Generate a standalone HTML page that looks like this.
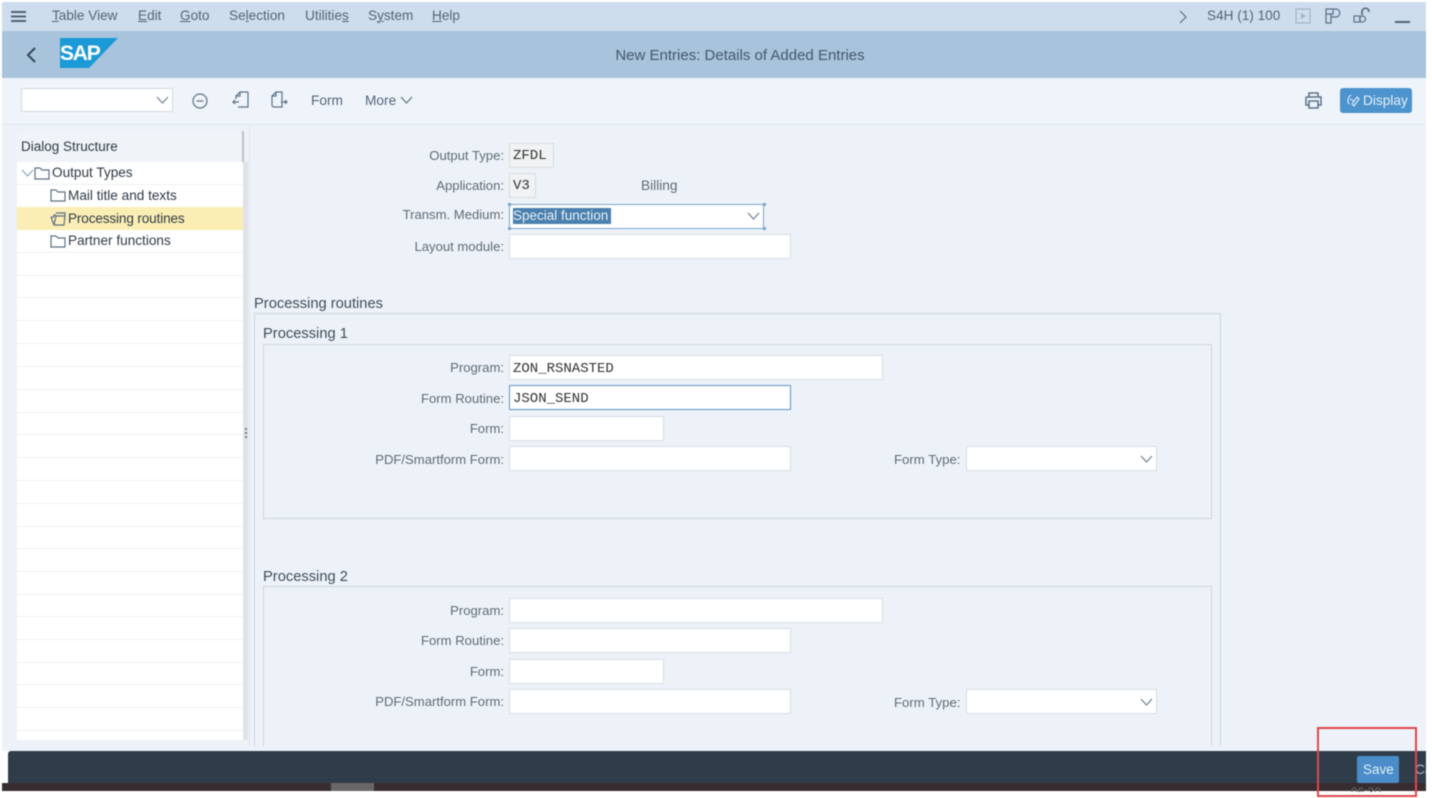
<!DOCTYPE html>
<html><head><meta charset="utf-8"><style>
html,body{margin:0;padding:0;background:#fff}
#p{position:relative;width:1432px;height:798px;overflow:hidden;background:#fff;font-family:"Liberation Sans",sans-serif;font-size:13.700px;color:#3f4d5a;filter:blur(.45px)}
#p div,#p span.a,#p svg{position:absolute}
.t{white-space:nowrap;line-height:18px}
.m{top:6.500px;color:#53657a;font-size:13.600px}
.m u{text-decoration-thickness:1px}
.l{white-space:nowrap;line-height:18px;text-align:right;width:240px;color:#5f6b76;font-size:13.100px}
.i{background:#fff;border:1px solid #d5dde5;box-sizing:border-box}
.v{font-family:"Liberation Mono",monospace;font-size:14px;color:#333;white-space:nowrap;line-height:18px}
.r{left:17px;width:226px;height:1px;background:#eceff3}
.k{font-size:13.600px;color:#2f3b46;white-space:nowrap;line-height:18px}
.f{position:absolute;border:1px solid #ccd5de;box-sizing:border-box}
svg{fill:none;stroke:#5c7188;stroke-width:1.2}
</style></head><body><div id="p">
<div style="left:2px;top:2px;width:1424px;height:29px;background:#cedded"></div>
<div style="left:2px;top:31px;width:1424px;height:47px;background:#a8c3dc"></div>
<div style="left:2px;top:78px;width:1424px;height:46px;background:#eff4fa;border-bottom:1px solid #dfe6ee"></div>
<div style="left:2px;top:125px;width:1424px;height:626px;background:#edf2f8"></div>

<svg style="left:10px;top:10px" width="17" height="14" viewBox="0 0 17 14"><path d="M1 2h15M1 6.500h15M1 11h15" stroke="#4f6378" stroke-width="2"/></svg>
<div class="t m" style="left:52px"><u>T</u>able View</div>
<div class="t m" style="left:138px"><u>E</u>dit</div>
<div class="t m" style="left:180px"><u>G</u>oto</div>
<div class="t m" style="left:229px">Se<u>l</u>ection</div>
<div class="t m" style="left:305px">Utilitie<u>s</u></div>
<div class="t m" style="left:368px">S<u>y</u>stem</div>
<div class="t m" style="left:432px"><u>H</u>elp</div>
<svg style="left:1178px;top:10px" width="10" height="14" viewBox="0 0 10 14"><path d="M2 1l6 6-6 6"/></svg>
<div class="t m" style="left:1207px;font-size:13.600px">S4H (1) 100</div>
<svg style="left:1295px;top:8px" width="16" height="16" viewBox="0 0 16 16"><rect x="1" y="1" width="14" height="14" stroke="#a5b5c6"/><path d="M6 5l5 3-5 3z" fill="#a5b5c6" stroke="none"/></svg>
<svg style="left:1324px;top:8px" width="18" height="16" viewBox="0 0 18 16"><path d="M2 1h7v5H2zM2 6v9h5v-9M9 1h3c5 0 5 8 0 8H7"/></svg>
<svg style="left:1353px;top:7px" width="18" height="17" viewBox="0 0 18 17"><rect x="1" y="9" width="6" height="6"/><circle cx="9.500" cy="12" r="3"/><path d="M9 8V5c0-5 7-5 7 0" stroke-width="1.800"/></svg>
<div style="left:1395px;top:21px;width:15px;height:2px;background:#4f6378"></div>

<svg style="left:25px;top:46px" width="12" height="18" viewBox="0 0 12 18"><path d="M10 2L3 9l7 7" stroke="#33475b" stroke-width="2"/></svg>
<svg style="left:60px;top:38px" width="58" height="30" viewBox="0 0 58 30"><path d="M0 0h58L29 30H0z" fill="#1c9ad8" stroke="none"/></svg>
<div class="t" style="left:60px;top:43px;font-size:21px;font-weight:bold;color:#fff;letter-spacing:-1.200px;line-height:22px">SAP</div>
<div class="t" style="left:0;top:47px;width:1480px;text-align:center;font-size:15px;color:#44586c">New Entries: Details of Added Entries</div>

<div class="i" style="left:21px;top:88px;width:152px;height:24px;border-color:#cfd7df"></div>
<svg style="left:156px;top:96px" width="13" height="9" viewBox="0 0 13 9"><path d="M1 1l5.500 6L12 1" stroke="#6d8093"/></svg>
<svg style="left:192px;top:93px" width="16" height="16" viewBox="0 0 16 16"><circle cx="8" cy="8" r="7"/><path d="M4.500 8h7"/></svg>
<svg style="left:232px;top:91px" width="17" height="18" viewBox="0 0 17 18"><path d="M16 1H8L4 5v3M16 1v15H6M8 1v4H4M7 11H1M3 9l-2 2 2 2"/></svg>
<svg style="left:271px;top:91px" width="17" height="18" viewBox="0 0 17 18"><path d="M5 1h6v15H3a2 2 0 0 1-2-2V5zM5 1v4H1M10 11h6M14 9l2 2-2 2"/></svg>
<div class="t" style="left:311px;top:92px;color:#53657a">Form</div>
<div class="t" style="left:365px;top:92px;color:#53657a">More</div>
<svg style="left:400px;top:96px" width="13" height="9" viewBox="0 0 13 9"><path d="M1 1l5.500 6L12 1"/></svg>
<svg style="left:1305px;top:92px" width="17" height="17" viewBox="0 0 17 17"><path d="M4 5V1h9v4M1 5h15v8h-3M1 5v8h3M4 9h9v7H4z" stroke-width="1.500"/></svg>
<div style="left:1340px;top:88px;width:72px;height:25px;background:#4d93cd;border-radius:3px"></div>
<svg style="left:1346px;top:93px" width="15" height="15" viewBox="0 0 15 15"><path d="M5 2C2 4 1 8 3 11M8 13l5-7-2-2-5 7zM4 6l4 2" stroke="#dbe9f5"/></svg>
<div class="t" style="left:1363px;top:92px;color:#e6f0f8">Display</div>

<!-- tree -->
<div style="left:17px;top:131px;width:226px;height:609px;background:#fff"></div>
<div style="left:17px;top:131px;width:226px;height:31px;background:#f0f3f7"></div>
<div style="left:242px;top:131px;width:2px;height:31px;background:#bcc2c9"></div>
<div style="left:243px;top:162px;width:5px;height:578px;background:#dfe3e8"></div>
<div class="t" style="left:21px;top:138px;color:#2f3b46;font-size:13.500px">Dialog Structure</div>
<div style="left:17px;top:207px;width:226px;height:23px;background:#fbeeb4"></div>
<div class="r" style="top:184px"></div><div class="r" style="top:252px"></div><div class="r" style="top:275px"></div><div class="r" style="top:297px"></div><div class="r" style="top:320px"></div><div class="r" style="top:343px"></div><div class="r" style="top:366px"></div><div class="r" style="top:389px"></div><div class="r" style="top:412px"></div><div class="r" style="top:434px"></div><div class="r" style="top:457px"></div><div class="r" style="top:480px"></div><div class="r" style="top:503px"></div><div class="r" style="top:526px"></div><div class="r" style="top:548px"></div><div class="r" style="top:571px"></div><div class="r" style="top:594px"></div><div class="r" style="top:616px"></div><div class="r" style="top:639px"></div><div class="r" style="top:662px"></div><div class="r" style="top:684px"></div><div class="r" style="top:707px"></div><div class="r" style="top:730px"></div>
<svg style="left:21px;top:169px" width="13" height="8" viewBox="0 0 13 8"><path d="M1 1l5.500 6L12 1" stroke="#8fa6bb"/></svg>
<svg style="left:34px;top:167px" width="16" height="13" viewBox="0 0 16 13"><path d="M1 1h5l2 2h7v9H1z"/></svg>
<div class="k" style="left:52px;top:164px">Output Types</div>
<svg style="left:50px;top:189px" width="16" height="13" viewBox="0 0 16 13"><path d="M1 1h5l2 2h7v9H1z"/></svg>
<div class="k" style="left:68px;top:187px">Mail title and texts</div>
<svg style="left:50px;top:212px" width="16" height="14" viewBox="0 0 16 14"><path d="M1 5h3M4 13L1 5M6 1h9v3M4 5V3h2M4 13h10l1-9H6z"/></svg>
<div class="k" style="left:68px;top:210px;letter-spacing:-.15px">Processing routines</div>
<svg style="left:50px;top:235px" width="16" height="13" viewBox="0 0 16 13"><path d="M1 1h5l2 2h7v9H1z"/></svg>
<div class="k" style="left:68px;top:232px">Partner functions</div>
<div style="left:245px;top:428px;width:2px;height:12px;background:repeating-linear-gradient(#6b7a88 0 2px,transparent 2px 4px)"></div>
<div style="left:249px;top:125px;width:1px;height:621px;background:#dfe5ec"></div>

<!-- header form -->
<div class="l" style="left:264px;top:147px">Output Type:</div>
<div class="f" style="left:509px;top:143px;width:45px;height:25px;background:#f1f2f3;border-color:#d8dcdf"></div>
<div class="v" style="left:513px;top:147px">ZFDL</div>
<div class="l" style="left:264px;top:177px">Application:</div>
<div class="f" style="left:509px;top:173px;width:27px;height:25px;background:#f1f2f3;border-color:#d8dcdf"></div>
<div class="v" style="left:513px;top:177px">V3</div>
<div class="t" style="left:641px;top:177px;color:#5f6b76">Billing</div>
<div class="l" style="left:264px;top:206px">Transm. Medium:</div>
<div class="f" style="left:509px;top:204px;width:255px;height:25px;background:#fff;border-color:#7aa5cc"></div>
<div style="left:508px;top:203px;width:3px;height:3px;background:#7aa5cc"></div><div style="left:763px;top:203px;width:3px;height:3px;background:#7aa5cc"></div><div style="left:508px;top:227px;width:3px;height:3px;background:#7aa5cc"></div><div style="left:763px;top:227px;width:3px;height:3px;background:#7aa5cc"></div>
<div style="left:513px;top:208px;width:98px;height:16px;background:#4a7fae"></div>
<div class="t" style="left:513px;top:207px;color:#e8f0f7;font-size:13.500px">Special function</div>
<svg style="left:747px;top:212px" width="13" height="9" viewBox="0 0 13 9"><path d="M1 1l5.500 6L12 1" stroke="#6d8093"/></svg>
<div class="l" style="left:264px;top:238px">Layout module:</div>
<div class="i" style="left:509px;top:234px;width:282px;height:25px"></div>

<div class="t" style="left:254px;top:295px;font-size:14.700px;color:#3f4d5a">Processing routines</div>
<div class="f" style="left:254px;top:313px;width:967px;height:433px;border-bottom:0"></div>
<div class="t" style="left:263px;top:325px;font-size:14.700px;color:#3f4d5a">Processing 1</div>
<div class="f" style="left:263px;top:344px;width:949px;height:175px"></div>
<div class="l" style="left:264px;top:359px">Program:</div>
<div class="i" style="left:509px;top:355px;width:374px;height:25px"></div>
<div class="v" style="left:513px;top:360px">ZON_RSNASTED</div>
<div class="l" style="left:264px;top:390px">Form Routine:</div>
<div class="i" style="left:509px;top:385px;width:282px;height:25px;border-color:#5d93c4"></div>
<div class="v" style="left:513px;top:390px">JSON_SEND</div>
<div class="l" style="left:264px;top:420px">Form:</div>
<div class="i" style="left:509px;top:416px;width:155px;height:25px"></div>
<div class="l" style="left:264px;top:451px">PDF/Smartform Form:</div>
<div class="i" style="left:509px;top:446px;width:282px;height:25px"></div>
<div class="t" style="left:894px;top:451px;color:#5f6b76;font-size:13.200px">Form Type:</div>
<div class="i" style="left:966px;top:446px;width:191px;height:25px"></div>
<svg style="left:1140px;top:455px" width="13" height="9" viewBox="0 0 13 9"><path d="M1 1l5.500 6L12 1" stroke="#6d8093"/></svg>

<div class="t" style="left:263px;top:568px;font-size:14.700px;color:#3f4d5a">Processing 2</div>
<div class="f" style="left:263px;top:586px;width:949px;height:160px;border-bottom:0"></div>
<div class="l" style="left:264px;top:602px">Program:</div>
<div class="i" style="left:509px;top:598px;width:374px;height:25px"></div>
<div class="l" style="left:264px;top:632px">Form Routine:</div>
<div class="i" style="left:509px;top:628px;width:282px;height:25px"></div>
<div class="l" style="left:264px;top:663px">Form:</div>
<div class="i" style="left:509px;top:659px;width:155px;height:25px"></div>
<div class="l" style="left:264px;top:693px">PDF/Smartform Form:</div>
<div class="i" style="left:509px;top:689px;width:282px;height:25px"></div>
<div class="t" style="left:894px;top:694px;color:#5f6b76;font-size:13.200px">Form Type:</div>
<div class="i" style="left:966px;top:689px;width:191px;height:25px"></div>
<svg style="left:1140px;top:698px" width="13" height="9" viewBox="0 0 13 9"><path d="M1 1l5.500 6L12 1" stroke="#6d8093"/></svg>

<!-- footer -->
<div style="left:2px;top:783px;width:1424px;height:8px;background:#372d31"></div>
<div style="left:8px;top:751px;width:1418px;height:32px;background:#2f3d4a;border-radius:3px 0 0 0"></div>
<div style="left:331px;top:783px;width:43px;height:8px;background:#6a6668"></div>
<div style="left:1357px;top:756px;width:42px;height:27px;background:#4a8dc8;border-radius:2px"></div>
<div class="t" style="left:1363px;top:761px;color:#e4eef6;font-size:13.500px">Save</div>
<div class="t" style="left:1415px;top:761px;width:11px;overflow:hidden;color:#a9b4be">Cancel</div>
<div class="t" style="left:1351px;top:786px;font-size:12px;color:#6c6c6c;height:6px;overflow:hidden;line-height:12px">06:30</div>
<div style="left:1317px;top:727px;width:100px;height:70px;border:2px solid #e0474c;box-sizing:border-box"></div>
</div></body></html>
